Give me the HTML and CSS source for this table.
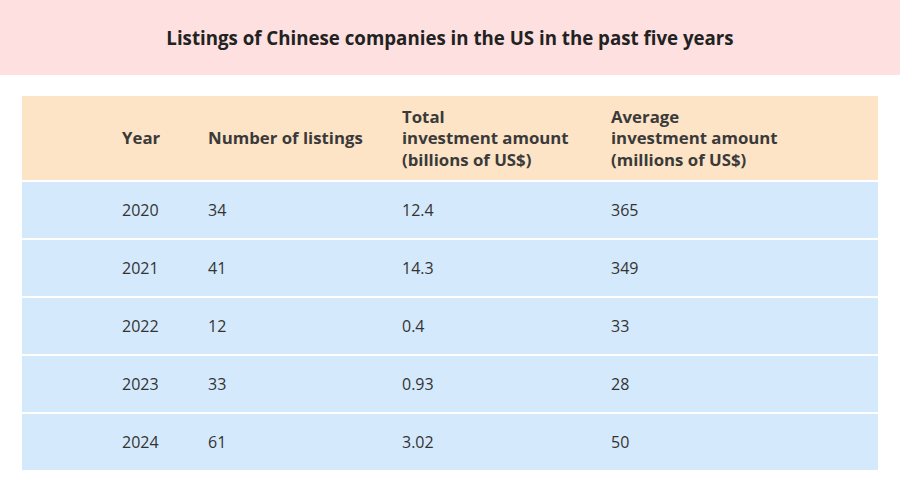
FILE: index.html
```html
<!DOCTYPE html>
<html>
<head>
<meta charset="utf-8">
<link rel="stylesheet" href="styles.css">
</head>
<body>
<header class="banner"><h1 class="title">Listings of Chinese companies in the US in the past five years</h1></header>
<main class="wrap">
<table class="data">
<thead>
<tr class="head-row">
<th class="c1">Year</th>
<th class="c2">Number of listings</th>
<th class="c3">Total<br>investment amount<br>(billions of US$)</th>
<th class="c4">Average<br>investment amount<br>(millions of US$)</th>
</tr>
</thead>
<tbody>
<tr><td class="c1">2020</td><td class="c2">34</td><td class="c3">12.4</td><td class="c4">365</td></tr>
<tr><td class="c1">2021</td><td class="c2">41</td><td class="c3">14.3</td><td class="c4">349</td></tr>
<tr><td class="c1">2022</td><td class="c2">12</td><td class="c3">0.4</td><td class="c4">33</td></tr>
<tr><td class="c1">2023</td><td class="c2">33</td><td class="c3">0.93</td><td class="c4">28</td></tr>
<tr><td class="c1">2024</td><td class="c2">61</td><td class="c3">3.02</td><td class="c4">50</td></tr>
</tbody>
</table>
</main>
</body>
</html>
```
FILE: styles.css
```css
* { box-sizing: border-box; }
html, body { margin: 0; padding: 0; background: #fff; }
body { font-family: "Open Sans", "Liberation Sans", sans-serif; color: #333; width: 900px; height: 490px; overflow: hidden; }
.banner { height: 75px; background: #fde0df; display: flex; align-items: center; justify-content: center; }
.title { margin: 0; font-size: 18.7px; font-weight: 700; color: #222; }
.wrap { padding: 19px 22px 0 22px; }
.data { width: 856px; border-collapse: separate; border-spacing: 0 2px; table-layout: fixed; }
.data th, .data td { text-align: left; padding: 0; vertical-align: middle; font-size: 16px; }
.head-row th { background: #fde4c6; height: 84px; font-weight: 700; font-size: 16.8px; line-height: 21.5px; color: #3a3a3a; }
.data td { background: #d5e9fc; height: 56px; color: #333; }
.c1 { width: 186px; padding-left: 100px !important; }
.c2 { width: 194px; }
.c3 { width: 209px; }
.c4 { width: 267px; }
```
